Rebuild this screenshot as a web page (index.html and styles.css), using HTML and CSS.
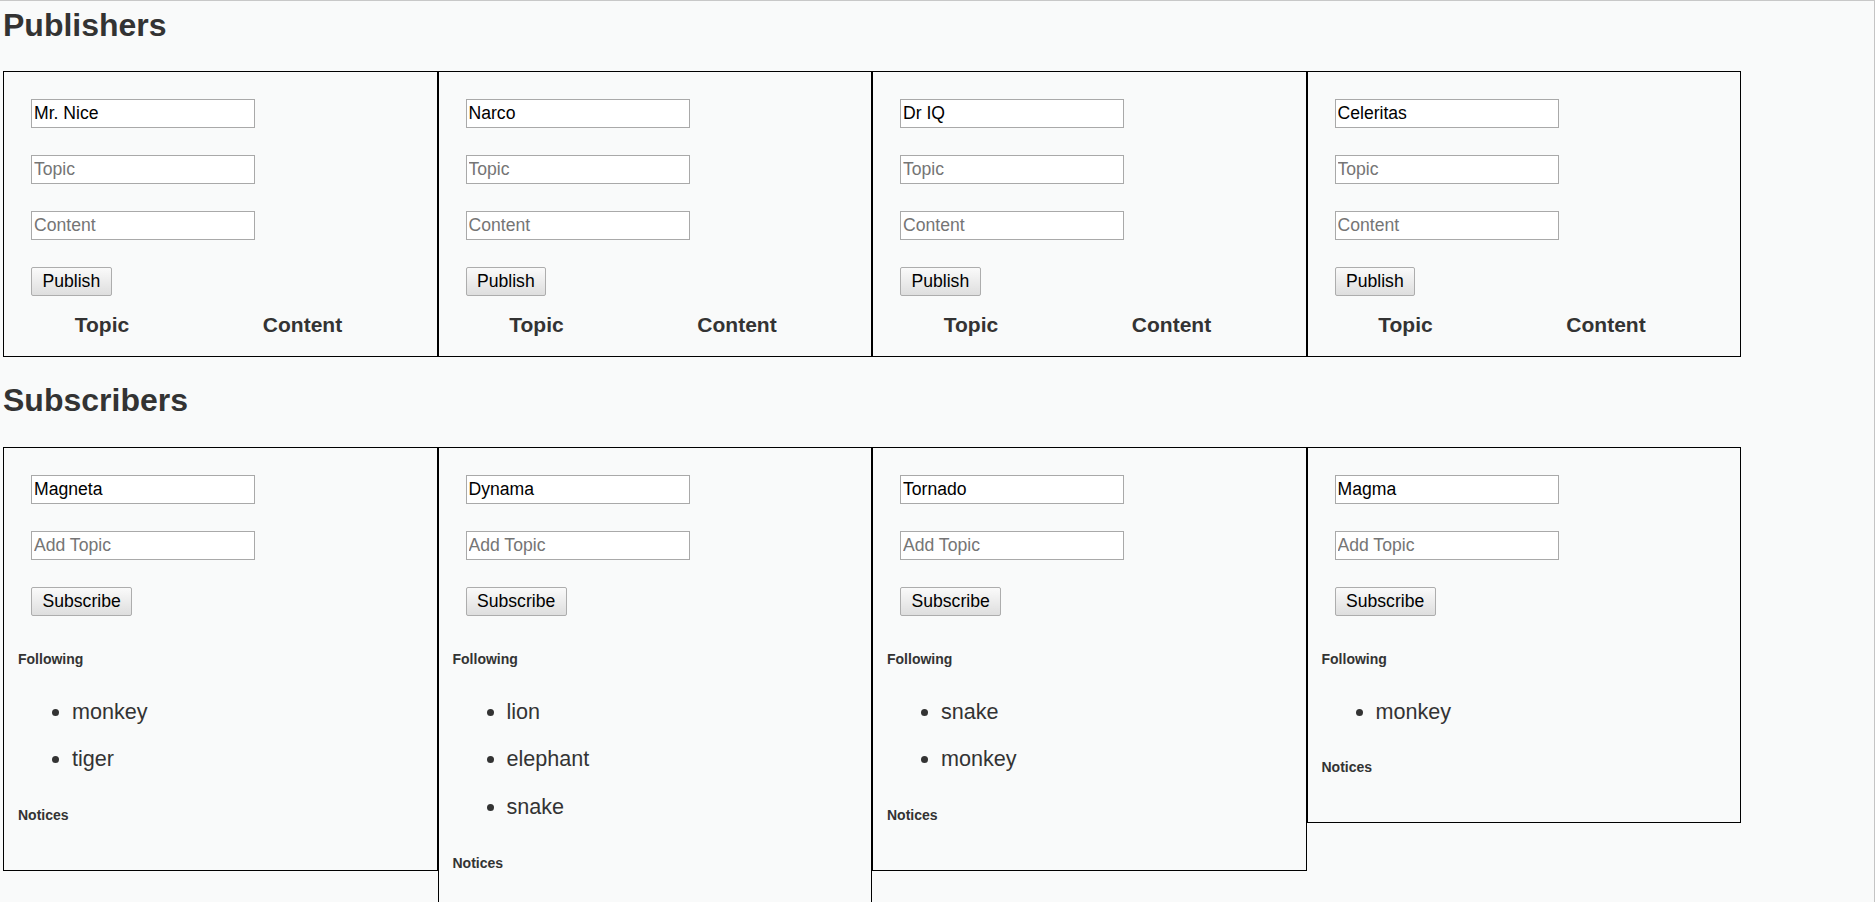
FILE: index.html
```html
<!DOCTYPE html>
<html lang="en">
<head>
<meta charset="utf-8">
<title>Publishers and Subscribers</title>
<link rel="stylesheet" href="styles.css">
</head>
<body>
<h1 class="section-title first">Publishers</h1>
<div class="cards">
  <div class="card">
    <input class="field" type="text" value="Mr. Nice">
    <input class="field" type="text" placeholder="Topic">
    <input class="field" type="text" placeholder="Content">
    <button class="btn" type="button">Publish</button>
    <div class="table-head"><span>Topic</span><span>Content</span></div>
  </div>
  <div class="card">
    <input class="field" type="text" value="Narco">
    <input class="field" type="text" placeholder="Topic">
    <input class="field" type="text" placeholder="Content">
    <button class="btn" type="button">Publish</button>
    <div class="table-head"><span>Topic</span><span>Content</span></div>
  </div>
  <div class="card">
    <input class="field" type="text" value="Dr IQ">
    <input class="field" type="text" placeholder="Topic">
    <input class="field" type="text" placeholder="Content">
    <button class="btn" type="button">Publish</button>
    <div class="table-head"><span>Topic</span><span>Content</span></div>
  </div>
  <div class="card">
    <input class="field" type="text" value="Celeritas">
    <input class="field" type="text" placeholder="Topic">
    <input class="field" type="text" placeholder="Content">
    <button class="btn" type="button">Publish</button>
    <div class="table-head"><span>Topic</span><span>Content</span></div>
  </div>
</div>

<h1 class="section-title">Subscribers</h1>
<div class="cards">
  <div class="card sub">
    <input class="field" type="text" value="Magneta">
    <input class="field" type="text" placeholder="Add Topic">
    <button class="btn" type="button">Subscribe</button>
    <h5 class="label following">Following</h5>
    <ul class="topics"><li>monkey</li><li>tiger</li></ul>
    <h5 class="label notices">Notices</h5>
  </div>
  <div class="card sub">
    <input class="field" type="text" value="Dynama">
    <input class="field" type="text" placeholder="Add Topic">
    <button class="btn" type="button">Subscribe</button>
    <h5 class="label following">Following</h5>
    <ul class="topics"><li>lion</li><li>elephant</li><li>snake</li></ul>
    <h5 class="label notices">Notices</h5>
  </div>
  <div class="card sub">
    <input class="field" type="text" value="Tornado">
    <input class="field" type="text" placeholder="Add Topic">
    <button class="btn" type="button">Subscribe</button>
    <h5 class="label following">Following</h5>
    <ul class="topics"><li>snake</li><li>monkey</li></ul>
    <h5 class="label notices">Notices</h5>
  </div>
  <div class="card sub">
    <input class="field" type="text" value="Magma">
    <input class="field" type="text" placeholder="Add Topic">
    <button class="btn" type="button">Subscribe</button>
    <h5 class="label following">Following</h5>
    <ul class="topics"><li>monkey</li></ul>
    <h5 class="label notices">Notices</h5>
  </div>
</div>
</body>
</html>
```
FILE: styles.css
```css
html {
  background: #f9fafa;
}
body {
  margin: 0;
  min-height: 100vh;
  box-sizing: border-box;
  border-top: 1px solid #c8c8c8;
  border-right: 1px solid #c4c4c4;
  padding: 0 0 0 3px;
  background: #f9fafa;
  font-family: "Liberation Sans", Arial, sans-serif;
  color: #333;
}
.section-title {
  font-size: 32px;
  line-height: 37px;
  font-weight: bold;
  margin: 25px 0 28px 0;
  color: #333;
}
.section-title.first {
  margin-top: 6px;
  margin-bottom: 27px;
}
.cards {
  display: flex;
  align-items: flex-start;
}
.card {
  box-sizing: border-box;
  width: 434.5px;
  flex: 0 0 434.5px;
  border: 1px solid #000;
  display: flex;
  flex-direction: column;
  align-items: flex-start;
  padding: 27px 0 19px 0;
}
.card.sub {
  padding-bottom: 46.5px;
}
.field {
  box-sizing: border-box;
  width: 224px;
  height: 29px;
  margin: 0 0 27px 27px;
  padding: 1px 2px;
  border: 1px solid #a9a9a9;
  border-radius: 0;
  background: #fff;
  font-family: "Liberation Sans", Arial, sans-serif;
  font-size: 17.6px;
  color: #000;
  outline: none;
}
.field::placeholder {
  color: #757575;
}
.btn {
  box-sizing: border-box;
  height: 29px;
  margin: 0 0 0 27px;
  padding: 0 10.5px;
  border: 1px solid #adadad;
  border-radius: 2px;
  background: linear-gradient(#fafafa, #dedede);
  font-family: "Liberation Sans", Arial, sans-serif;
  font-size: 17.6px;
  color: #000;
}
.table-head {
  display: grid;
  grid-template-columns: 196px 205px;
  margin-top: 17px;
  font-size: 21px;
  line-height: 24px;
  font-weight: bold;
  color: #333;
  text-align: center;
}
.label {
  font-size: 14px;
  line-height: 16px;
  font-weight: bold;
  margin: 0 0 0 14px;
  color: #333;
}
.following {
  margin-top: 35px;
}
.topics {
  margin: 20.5px 0 0 0;
  padding: 0 0 0 68px;
  font-size: 21.6px;
  line-height: 47.75px;
  color: #333;
}
.notices {
  margin-top: 24px;
}
```
